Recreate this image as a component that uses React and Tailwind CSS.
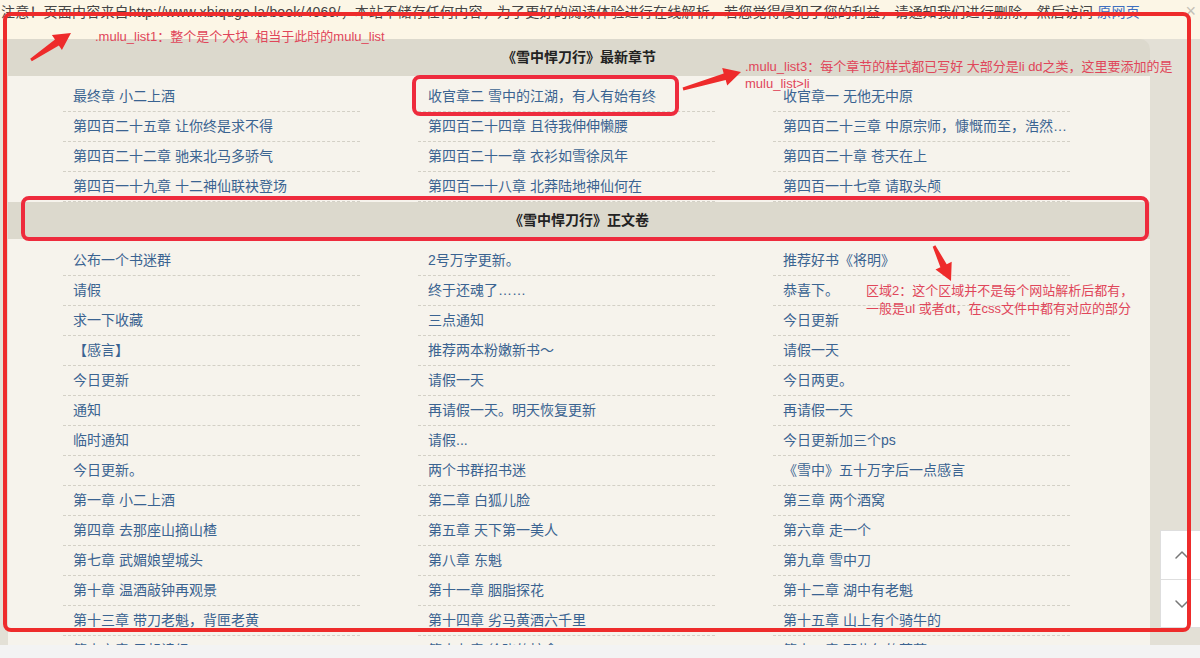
import { ChevronUp, ChevronDown } from 'lucide-react'

const latest = [
  ['最终章 小二上酒', '收官章二 雪中的江湖，有人有始有终', '收官章一 无他无中原'],
  ['第四百二十五章 让你终是求不得', '第四百二十四章 且待我伸伸懒腰', '第四百二十三章 中原宗师，慷慨而至，浩然而去'],
  ['第四百二十二章 驰来北马多骄气', '第四百二十一章 衣衫如雪徐凤年', '第四百二十章 苍天在上'],
  ['第四百一十九章 十二神仙联袂登场', '第四百一十八章 北莽陆地神仙何在', '第四百一十七章 请取头颅'],
]

const volume = [
  ['公布一个书迷群', '2号万字更新。', '推荐好书《将明》'],
  ['请假', '终于还魂了……', '恭喜下。'],
  ['求一下收藏', '三点通知', '今日更新'],
  ['【感言】', '推荐两本粉嫩新书～', '请假一天'],
  ['今日更新', '请假一天', '今日两更。'],
  ['通知', '再请假一天。明天恢复更新', '再请假一天'],
  ['临时通知', '请假...', '今日更新加三个ps'],
  ['今日更新。', '两个书群招书迷', '《雪中》五十万字后一点感言'],
  ['第一章 小二上酒', '第二章 白狐儿脸', '第三章 两个酒窝'],
  ['第四章 去那座山摘山楂', '第五章 天下第一美人', '第六章 走一个'],
  ['第七章 武媚娘望城头', '第八章 东魁', '第九章 雪中刀'],
  ['第十章 温酒敲钟再观景', '第十一章 胭脂探花', '第十二章 湖中有老魁'],
  ['第十三章 带刀老魁，背匣老黄', '第十四章 劣马黄酒六千里', '第十五章 山上有个骑牛的'],
  ['第十六章 早起读经', '第十七章 徐骁的惦念', '第十八章 那些年的菩萨'],
]

// tapered markup arrow, tail -> tip
function arrow(x1, y1, x2, y2) {
  const dx = x2 - x1
  const dy = y2 - y1
  const len = Math.hypot(dx, dy)
  const ux = dx / len
  const uy = dy / len
  const nx = -uy
  const ny = ux
  const head = 17
  const hw = 9
  const sw0 = 1.5
  const sw1 = 3.5
  const bx = x2 - ux * head
  const by = y2 - uy * head
  const pts = [
    [x1 + nx * sw0, y1 + ny * sw0],
    [bx + nx * sw1, by + ny * sw1],
    [bx + nx * hw, by + ny * hw],
    [x2, y2],
    [bx - nx * hw, by - ny * hw],
    [bx - nx * sw1, by - ny * sw1],
    [x1 - nx * sw0, y1 - ny * sw0],
  ]
  return pts.map((p) => p[0].toFixed(1) + ',' + p[1].toFixed(1)).join(' ')
}

function Section({ title, rows, first }) {
  return (
    <div>
      <div
        className={
          'h-[37px] leading-[37px] text-center text-[14px] font-bold text-[#222] bg-[#dcd9cd] ' +
          (first ? 'rounded-tr-[10px]' : '')
        }
      >
        {title}
      </div>
      <ul className={'bg-[#f6f3ec] pl-[55px] grid grid-cols-[355px_355px_355px] ' + (first ? 'pt-[6px]' : 'pt-[7px]')}>
        {rows.flat().map((t, i) => (
          <li
            key={i}
            className="w-[297px] h-[30px] leading-[29px] pl-[10px] border-b border-dashed border-[#d3d0c6] text-[14px] text-[#3a6391] whitespace-nowrap overflow-hidden text-ellipsis"
          >
            {t}
          </li>
        ))}
      </ul>
    </div>
  )
}

export default function App() {
  return (
    <div className="relative w-[1200px] h-[658px] overflow-hidden bg-[#e3e0d6] font-['Liberation_Sans','Noto_Sans_CJK_SC',sans-serif]">
      {/* notice */}
      <div className="relative h-[39px] bg-[#fcf6e6]">
        <p className="h-[24px] leading-[24px] pl-[1px] text-[14px] tracking-[0.2px] text-[#444] whitespace-nowrap">
          注意！页面内容来自http://www.xbiquge.la/book/4069/，本站不储存任何内容，为了更好的阅读体验进行在线解析，若您觉得侵犯了您的利益，请通知我们进行删除，然后访问{' '}
          <span className="text-[#3f6fbf]">原网页</span>
        </p>
        <span className="absolute right-[4px] top-[1px] text-[18px] leading-[20px] text-[#c4c0b6]">×</span>
      </div>

      <div className="ml-[8px] w-[1142px]">
        <Section title="《雪中悍刀行》最新章节" rows={latest} first />
        <Section title="《雪中悍刀行》正文卷" rows={volume} />
      </div>

      {/* browser bottom strip */}
      <div className="absolute left-0 bottom-0 w-full h-[13px] bg-[#f3f3f3]" />

      {/* scroll buttons */}
      <div className="absolute left-[1160px] top-[530px] w-[44px] flex flex-col">
        <div className="h-[50px] bg-white border border-[#dedede] flex items-center justify-center">
          <ChevronUp size={24} strokeWidth={1.5} className="text-[#777]" />
        </div>
        <div className="h-[48px] bg-white border border-t-0 border-[#dedede] flex items-center justify-center">
          <ChevronDown size={24} strokeWidth={1.5} className="text-[#777]" />
        </div>
      </div>

      {/* markup */}
      <svg className="absolute inset-0 pointer-events-none" width="1200" height="658">
        <rect x="5" y="14" width="1184" height="616" rx="6" fill="none" stroke="#ee2b2b" strokeWidth="4" />
        <rect x="414" y="77" width="263" height="37" rx="6" fill="none" stroke="#ee2b3d" strokeWidth="4" />
        <rect x="23" y="198" width="1124" height="41" rx="6" fill="none" stroke="#ee2b3d" strokeWidth="4" />
        <polygon points={arrow(31, 60, 71, 33)} fill="#ee2b2b" />
        <polygon points={arrow(683, 89, 741, 72)} fill="#ee2b2b" />
        <polygon points={arrow(934, 246, 951, 281)} fill="#ee2b2b" />
      </svg>

      <p className="absolute left-[95px] top-[28px] text-[13px] leading-[18px] text-[#e0465a] whitespace-nowrap">
        .mulu_list1：整个是个大块&nbsp;&nbsp;相当于此时的mulu_list
      </p>
      <div className="absolute left-[745px] top-[58px] text-[13px] leading-[17px] text-[#e0465a] whitespace-nowrap">
        <p>.mulu_list3：每个章节的样式都已写好 大部分是li dd之类，这里要添加的是</p>
        <p>mulu_list&gt;li</p>
      </div>
      <div className="absolute left-[866px] top-[282px] text-[13px] leading-[18px] text-[#e0465a] whitespace-nowrap">
        <p>区域2：这个区域并不是每个网站解析后都有，</p>
        <p>一般是ul 或者dt，在css文件中都有对应的部分</p>
      </div>
    </div>
  )
}
